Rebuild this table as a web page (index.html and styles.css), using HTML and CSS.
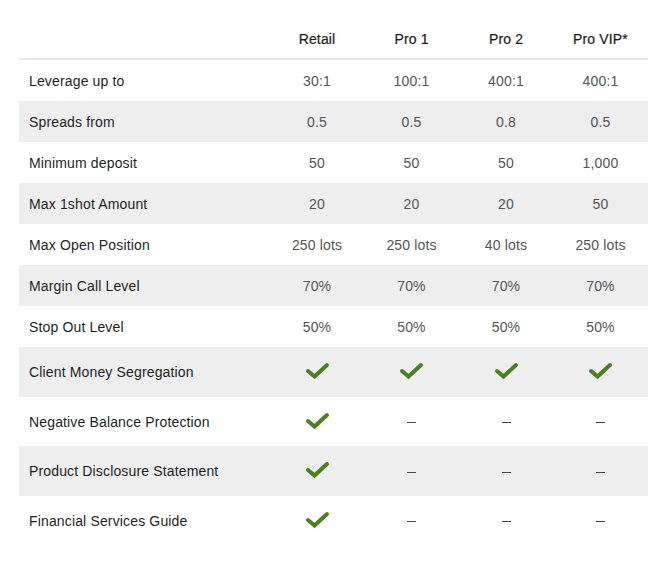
FILE: index.html
```html
<!DOCTYPE html>
<html>
<head>
<meta charset="utf-8">
<link rel="stylesheet" href="styles.css">
</head>
<body>
<table class="compare">
  <colgroup>
    <col class="c-label"><col class="c-a"><col class="c-b"><col class="c-a"><col class="c-b">
  </colgroup>
  <thead>
    <tr><th></th><th>Retail</th><th>Pro 1</th><th>Pro 2</th><th>Pro VIP*</th></tr>
  </thead>
  <tbody>
    <tr><td>Leverage up to</td><td>30:1</td><td>100:1</td><td>400:1</td><td>400:1</td></tr>
    <tr class="alt"><td>Spreads from</td><td>0.5</td><td>0.5</td><td>0.8</td><td>0.5</td></tr>
    <tr><td>Minimum deposit</td><td>50</td><td>50</td><td>50</td><td>1,000</td></tr>
    <tr class="alt"><td>Max 1shot Amount</td><td>20</td><td>20</td><td>20</td><td>50</td></tr>
    <tr><td>Max Open Position</td><td>250 lots</td><td>250 lots</td><td>40 lots</td><td>250 lots</td></tr>
    <tr class="alt"><td>Margin Call Level</td><td>70%</td><td>70%</td><td>70%</td><td>70%</td></tr>
    <tr><td>Stop Out Level</td><td>50%</td><td>50%</td><td>50%</td><td>50%</td></tr>
    <tr class="alt tall"><td>Client Money Segregation</td>
      <td><svg class="check" viewBox="0 0 25 18" width="25" height="18"><polyline points="3,9 9.5,14.5 22,3"/></svg></td>
      <td><svg class="check" viewBox="0 0 25 18" width="25" height="18"><polyline points="3,9 9.5,14.5 22,3"/></svg></td>
      <td><svg class="check" viewBox="0 0 25 18" width="25" height="18"><polyline points="3,9 9.5,14.5 22,3"/></svg></td>
      <td><svg class="check" viewBox="0 0 25 18" width="25" height="18"><polyline points="3,9 9.5,14.5 22,3"/></svg></td>
    </tr>
    <tr class="tall2"><td>Negative Balance Protection</td>
      <td><svg class="check" viewBox="0 0 25 18" width="25" height="18"><polyline points="3,9 9.5,14.5 22,3"/></svg></td>
      <td><span class="dash"></span></td><td><span class="dash"></span></td><td><span class="dash"></span></td>
    </tr>
    <tr class="alt tall"><td>Product Disclosure Statement</td>
      <td><svg class="check" viewBox="0 0 25 18" width="25" height="18"><polyline points="3,9 9.5,14.5 22,3"/></svg></td>
      <td><span class="dash"></span></td><td><span class="dash"></span></td><td><span class="dash"></span></td>
    </tr>
    <tr class="tall2"><td>Financial Services Guide</td>
      <td><svg class="check" viewBox="0 0 25 18" width="25" height="18"><polyline points="3,9 9.5,14.5 22,3"/></svg></td>
      <td><span class="dash"></span></td><td><span class="dash"></span></td><td><span class="dash"></span></td>
    </tr>
  </tbody>
</table>
</body>
</html>
```
FILE: styles.css
```css
html, body {
  margin: 0;
  padding: 0;
  background: #ffffff;
}
body {
  padding: 19px 0 0 19px;
  font-family: "Liberation Sans", Arial, sans-serif;
  font-size: 14px;
  color: #222222;
  letter-spacing: 0.15px;
}
.compare {
  border-collapse: collapse;
  border-spacing: 0;
  table-layout: fixed;
  width: 629px;
}
.c-label { width: 251px; }
.c-a { width: 94px; }
.c-b { width: 95px; }
.compare th {
  height: 39px;
  padding: 0;
  font-weight: normal;
  -webkit-text-stroke: 0.2px #1c1c1c;
  color: #1c1c1c;
  font-size: 14px;
  text-align: center;
  vertical-align: middle;
  border-bottom: 2px solid #e3e6ea;
}
.compare td {
  height: 41px;
  padding: 0;
  text-align: center;
  vertical-align: middle;
  color: #555555;
  line-height: 16px;
}
.compare td:first-child {
  text-align: left;
  padding-left: 10px;
  color: #1f1f1f;
}
.compare tr.alt td { background: #eeeeee; }
.compare tr.tall td { height: 50px; }
.compare tr.tall2 td { height: 49px; }
.check {
  display: inline-block;
  vertical-align: middle;
  margin-top: -4px;
}
.check polyline {
  fill: none;
  stroke: #4a801f;
  stroke-width: 4;
  stroke-linecap: round;
  stroke-linejoin: miter;
}
.dash {
  display: inline-block;
  width: 9px;
  height: 1px;
  background: #444444;
  vertical-align: middle;
}
```
